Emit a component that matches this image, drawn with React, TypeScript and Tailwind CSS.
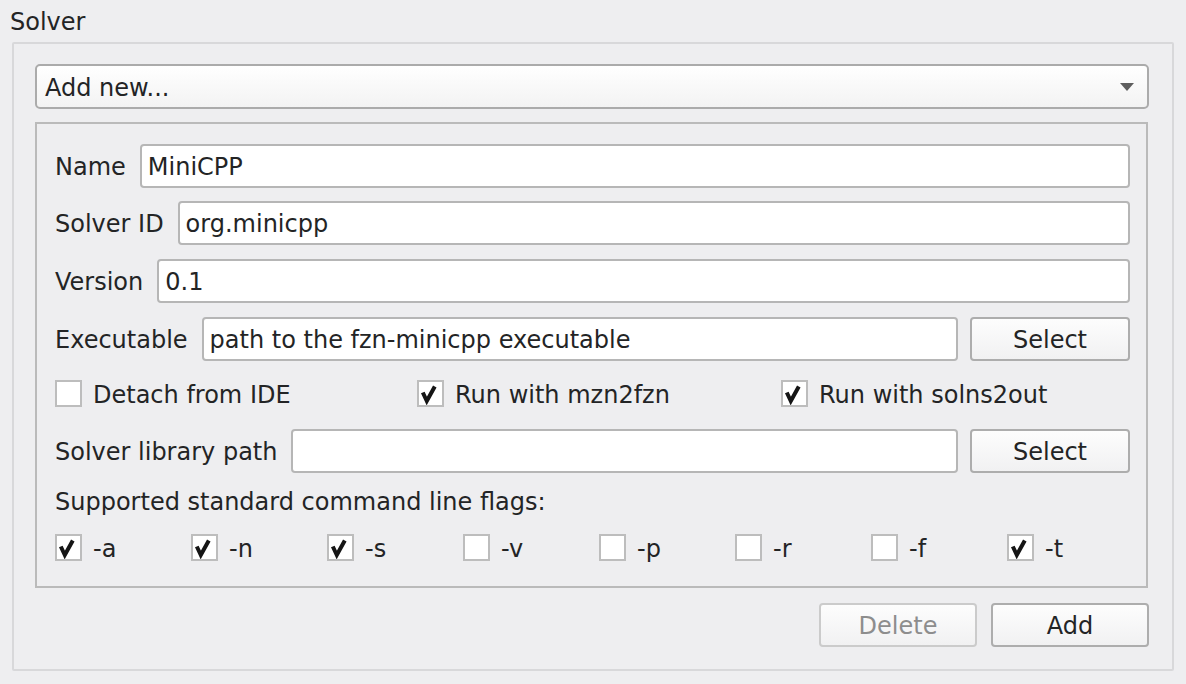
import React from "react";

const Check = () => (
  <svg viewBox="0 0 23 23" className="w-[23px] h-[23px]">
    <polyline
      points="3.8,10.5 7.8,19 15.8,4.5"
      fill="none"
      stroke="#151515"
      strokeWidth="4"
      strokeLinejoin="miter"
      strokeLinecap="butt"
    />
  </svg>
);

const CheckBox = ({ checked, label }: { checked: boolean; label: string }) => (
  <div className="flex items-center h-[27px]">
    <div className="w-[27px] h-[27px] border-2 border-[#bdbdbd] bg-white shrink-0">
      {checked && <Check />}
    </div>
    <span className="ml-[11px] pt-[3px] leading-[28px] whitespace-nowrap">{label}</span>
  </div>
);

const TextInput = ({ value }: { value: string }) => (
  <div className="flex-1 h-[44px] border-2 border-[#b6b6b6] rounded-[4px] bg-white pl-[6px] pt-[2px] flex items-center leading-[28px] whitespace-nowrap overflow-hidden">
    {value}
  </div>
);

const PushButton = ({
  children,
  disabled = false,
  className = "",
}: {
  children: React.ReactNode;
  disabled?: boolean;
  className?: string;
}) => (
  <div
    className={
      "w-[158px] h-[44px] shrink-0 rounded-[4px] border-2 pt-[2px] flex items-center justify-center leading-[28px] bg-gradient-to-b from-[#fdfdfd] to-[#f1f1f2] " +
      (disabled ? "border-[#cbcbcb] text-[#8d8d8d] " : "border-[#adadad] ") +
      className
    }
  >
    {children}
  </div>
);

const FieldRow = ({
  label,
  value,
  withSelect = false,
}: {
  label: string;
  value: string;
  withSelect?: boolean;
}) => (
  <div className="flex items-center h-[44px]">
    <span className="leading-[28px] pt-[2px] whitespace-nowrap mr-[14px]">{label}</span>
    <TextInput value={value} />
    {withSelect && (
      <PushButton className="ml-[12px] w-[160px]">Select</PushButton>
    )}
  </div>
);

const flags = [
  { f: "-a", on: true },
  { f: "-n", on: true },
  { f: "-s", on: true },
  { f: "-v", on: false },
  { f: "-p", on: false },
  { f: "-r", on: false },
  { f: "-f", on: false },
  { f: "-t", on: true },
];

export default function App() {
  return (
    <div className="w-[1186px] h-[684px] bg-[#eeeef0] text-[#232425] text-[24px] font-['DejaVu_Sans',sans-serif] overflow-hidden">
      <div className="pl-[10px] pt-[8px] h-[42px] leading-[28px]">Solver</div>

      <div className="ml-[12px] w-[1162px] h-[629px] border-2 border-[#d8d8da] rounded-[2px] pl-[21px] pt-[20px]">
        {/* combo box */}
        <div className="w-[1114px] h-[45px] rounded-[5px] border-2 border-[#ababab] bg-gradient-to-b from-[#ffffff] to-[#f3f3f3] flex items-center pl-[8px] pr-[13px]">
          <span className="leading-[28px] pt-[2px] flex-1">Add new...</span>
          <svg viewBox="0 0 14 8" className="w-[14px] h-[8px]">
            <polygon points="0,0 14,0 7,8" fill="#5e5e5e" />
          </svg>
        </div>

        {/* solver frame */}
        <div className="mt-[13px] w-[1113px] h-[466px] border-2 border-[#bababa] pl-[18px] pr-[16px] pt-[20px] flex flex-col">
          <FieldRow label="Name" value="MiniCPP" />
          <div className="mt-[13px]">
            <FieldRow label="Solver ID" value="org.minicpp" />
          </div>
          <div className="mt-[14px]">
            <FieldRow label="Version" value="0.1" />
          </div>
          <div className="mt-[14px]">
            <FieldRow
              label="Executable"
              value="path to the fzn-minicpp executable"
              withSelect
            />
          </div>

          <div className="mt-[19px] flex">
            <div className="w-[362px] shrink-0">
              <CheckBox checked={false} label="Detach from IDE" />
            </div>
            <div className="w-[364px] shrink-0">
              <CheckBox checked label="Run with mzn2fzn" />
            </div>
            <div>
              <CheckBox checked label="Run with solns2out" />
            </div>
          </div>

          <div className="mt-[22px]">
            <FieldRow label="Solver library path" value="" withSelect />
          </div>

          <div className="mt-[15px] h-[28px] leading-[28px]">
            Supported standard command line flags:
          </div>

          <div className="mt-[18px] flex">
            {flags.map((x) => (
              <div key={x.f} className="w-[136px] shrink-0">
                <CheckBox checked={x.on} label={x.f} />
              </div>
            ))}
          </div>
        </div>

        {/* action buttons */}
        <div className="mt-[15px] w-[1114px] flex justify-end gap-[14px]">
          <PushButton disabled>Delete</PushButton>
          <PushButton>Add</PushButton>
        </div>
      </div>
    </div>
  );
}
